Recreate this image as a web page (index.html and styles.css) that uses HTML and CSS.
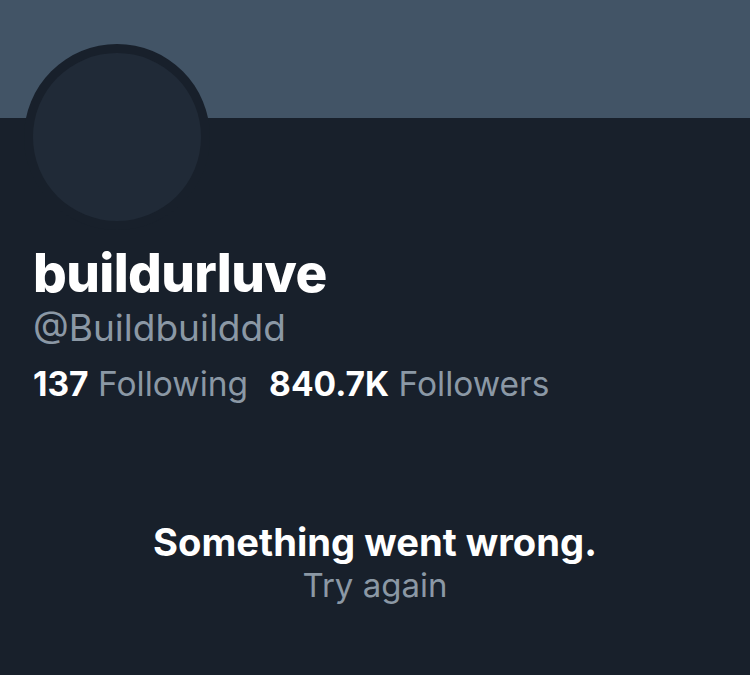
FILE: index.html
```html
<!DOCTYPE html>
<html>
<head>
<meta charset="utf-8">
<link rel="stylesheet" href="styles.css">
</head>
<body>
<div class="banner"></div>
<div class="profile">
  <div class="avatar"><div class="avatar-inner"></div></div>
  <div class="name">buildurluve</div>
  <div class="handle">@Buildbuilddd</div>
  <div class="stats">
    <span class="stat"><b>137</b> Following</span>
    <span class="stat"><b>840.7K</b> Followers</span>
  </div>
</div>
<div class="error">
  <div class="error-title">Something went wrong.</div>
  <div class="error-retry">Try again</div>
</div>
</body>
</html>
```
FILE: styles.css
```css
html, body {
  margin: 0;
  padding: 0;
  background: #18202b;
  height: 100%;
}
body {
  font-family: Inter, Roboto, "Liberation Sans", sans-serif;
  color: #ffffff;
}
.banner {
  height: 118px;
  background: #425466;
}
.profile {
  padding-left: 24px;
}
.avatar {
  width: 186px;
  height: 186px;
  box-sizing: border-box;
  border-radius: 50%;
  background: #18202b;
  padding: 9px;
  margin-top: -74px;
}
.avatar-inner {
  width: 100%;
  height: 100%;
  border-radius: 50%;
  background: #202a37;
}
.name {
  margin-left: 9px;
  margin-top: 13px;
  font-size: 53px;
  font-weight: 800;
  line-height: 61px;
  letter-spacing: -0.6px;
}
.handle {
  margin-left: 9px;
  font-size: 37px;
  line-height: 48px;
  color: #8b98a5;
}
.stats {
  margin-left: 9px;
  margin-top: 10px;
  font-size: 33.5px;
  line-height: 44px;
  color: #8b98a5;
  display: flex;
  gap: 21px;
}
.stat b {
  color: #ffffff;
  font-weight: 700;
}
.error {
  margin-top: 112px;
  text-align: center;
}
.error-title {
  font-size: 38.2px;
  font-weight: 700;
  line-height: 48px;
}
.error-retry {
  font-size: 33px;
  line-height: 38px;
  color: #8b98a5;
}
```
